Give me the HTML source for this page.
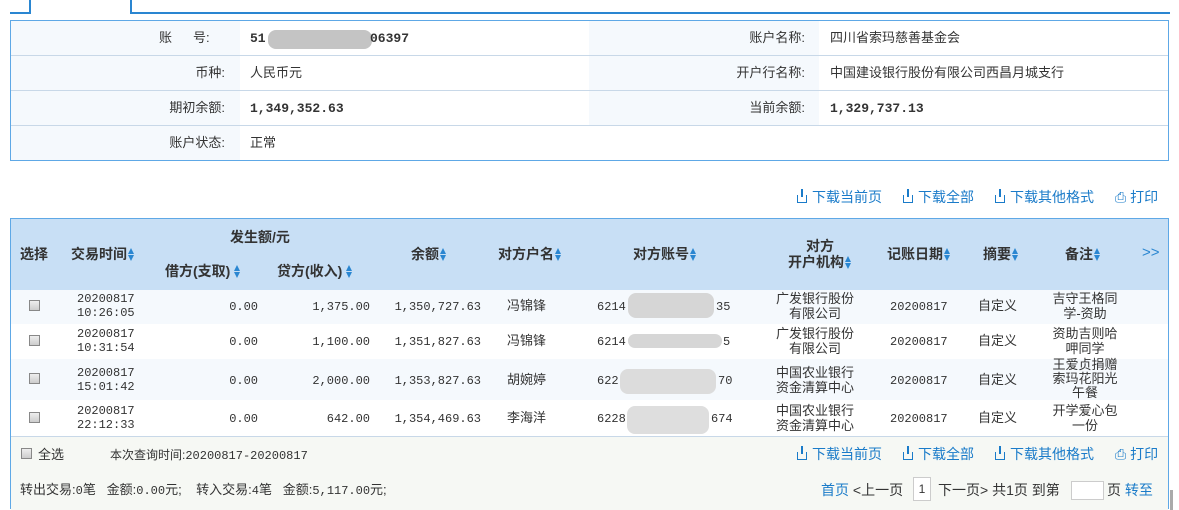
<!DOCTYPE html>
<html><head><meta charset="utf-8"><style>
*{margin:0;padding:0;box-sizing:border-box}
body{width:1179px;height:510px;background:#fff;position:relative;overflow:hidden;font-family:"Liberation Sans","Noto Sans CJK SC",sans-serif;font-size:13px;color:#333}
.a{position:absolute;white-space:nowrap;line-height:16px}
.m{font-family:"Liberation Mono","Noto Sans CJK SC",monospace;font-size:12px}
.mb{font-family:"Liberation Mono","Noto Sans CJK SC",monospace;font-size:13px;font-weight:bold}
.r{text-align:right}.c{text-align:center}
.h{font-weight:bold;font-size:14px;color:#333}
.ar{display:inline-block;width:7px;height:14px;vertical-align:middle;position:relative;margin-left:1px}
.ar:before{content:"";position:absolute;left:0;top:0;border:3.5px solid transparent;border-bottom:6px solid #2a86d1;border-top:0}
.ar:after{content:"";position:absolute;left:0;top:7px;border:3.5px solid transparent;border-top:6px solid #2a86d1;border-bottom:0}
.lk{color:#1a7bc9;font-size:14px}
.blur{position:absolute;background:#ccc;border-radius:8px}
.cb{position:absolute;width:11px;height:11px;border:1px solid #888;background:linear-gradient(#eee,#ccc)}
.dl{display:inline-block;width:10px;height:8px;border:1.5px solid #1a7bc9;border-top:none;margin-right:5px;vertical-align:-1px;position:relative}
.dl:before{content:"";position:absolute;left:3px;top:-6px;width:1.5px;height:8px;background:#1a7bc9}
</style></head><body>
<div class="a" style="left:10px;top:12px;width:20px;height:2px;background:#2a86d1"></div>
<div class="a" style="left:29px;top:0;width:2px;height:14px;background:#2a86d1"></div>
<div class="a" style="left:130px;top:0;width:2px;height:14px;background:#2a86d1"></div>
<div class="a" style="left:130px;top:12px;width:1040px;height:2px;background:#2a86d1"></div>

<div class="a" style="left:10px;top:20px;width:1159px;height:141px;border:1px solid #5ea8e6"></div>
<div class="a" style="left:11px;top:21px;width:229px;height:139px;background:#f5f9fd"></div>
<div class="a" style="left:589px;top:21px;width:230px;height:105px;background:#f5f9fd"></div>
<div class="a" style="left:11px;top:55px;width:1157px;height:1px;background:#c8d8e8"></div>
<div class="a" style="left:11px;top:90px;width:1157px;height:1px;background:#c8d8e8"></div>
<div class="a" style="left:11px;top:125px;width:1157px;height:1px;background:#c8d8e8"></div>
<div class="a" style="left:159px;top:30px">账</div>
<div class="a" style="left:193px;top:30px">号:</div>
<div class="a r" style="left:100px;width:125px;top:65px">币种:</div>
<div class="a r" style="left:100px;width:125px;top:100px">期初余额:</div>
<div class="a r" style="left:100px;width:125px;top:135px">账户状态:</div>
<div class="a mb" style="left:250px;top:31px">51</div>
<div class="blur" style="left:268px;top:30px;width:104px;height:19px;background:#c4c4c4"></div>
<div class="a mb" style="left:370px;top:31px">06397</div>
<div class="a" style="left:250px;top:65px">人民币元</div>
<div class="a mb" style="left:250px;top:101px">1,349,352.63</div>
<div class="a" style="left:250px;top:135px">正常</div>
<div class="a r" style="left:680px;width:125px;top:30px">账户名称:</div>
<div class="a r" style="left:680px;width:125px;top:65px">开户行名称:</div>
<div class="a r" style="left:680px;width:125px;top:100px">当前余额:</div>
<div class="a" style="left:830px;top:30px">四川省索玛慈善基金会</div>
<div class="a" style="left:830px;top:65px">中国建设银行股份有限公司西昌月城支行</div>
<div class="a mb" style="left:830px;top:101px">1,329,737.13</div>

<div class="a lk" style="left:797px;top:189px"><span class="dl"></span>下载当前页</div>
<div class="a lk" style="left:903px;top:189px"><span class="dl"></span>下载全部</div>
<div class="a lk" style="left:995px;top:189px"><span class="dl"></span>下载其他格式</div>
<div class="a lk" style="left:1115px;top:189px">⎙ 打印</div>

<div class="a" style="left:10px;top:218px;width:1159px;height:291px;border:1px solid #5ea8e6;border-bottom:none"></div>
<div class="a" style="left:11px;top:219px;width:1157px;height:71px;background:#c8dff5"></div>
<div class="a" style="left:11px;top:290px;width:1157px;height:34px;background:#f5f9fd"></div>
<div class="a" style="left:11px;top:359px;width:1157px;height:41px;background:#f5f9fd"></div>
<div class="a" style="left:11px;top:436px;width:1157px;height:1px;background:#c8d8e8"></div>
<div class="a" style="left:11px;top:437px;width:1157px;height:73px;background:#f6f8f4"></div>
<div class="a h" style="left:20px;top:246px">选择</div>
<div class="a h" style="left:71px;top:246px">交易时间<span class="ar"></span></div>
<div class="a h" style="left:230px;top:229px">发生额/元</div>
<div class="a h" style="left:165px;top:263px">借方(支取)<span class="ar" style="margin-left:4px"></span></div>
<div class="a h" style="left:277px;top:263px">贷方(收入)<span class="ar" style="margin-left:4px"></span></div>
<div class="a h" style="left:411px;top:246px">余额<span class="ar"></span></div>
<div class="a h" style="left:498px;top:246px">对方户名<span class="ar"></span></div>
<div class="a h" style="left:633px;top:246px">对方账号<span class="ar"></span></div>
<div class="a h c" style="left:770px;width:100px;top:238px;line-height:16px">对方<br>开户机构<span class="ar"></span></div>
<div class="a h" style="left:887px;top:246px">记账日期<span class="ar"></span></div>
<div class="a h" style="left:983px;top:246px">摘要<span class="ar"></span></div>
<div class="a h" style="left:1065px;top:246px">备注<span class="ar"></span></div>
<div class="a" style="left:1142px;top:245px;color:#2a86d1;font-size:15px">&gt;&gt;</div>

<div class="cb" style="left:29px;top:300px"></div>
<div class="cb" style="left:29px;top:335px"></div>
<div class="cb" style="left:29px;top:373px"></div>
<div class="cb" style="left:29px;top:412px"></div>

<div class="a m" style="left:77px;top:292px;line-height:14px">20200817<br>10:26:05</div>
<div class="a m" style="left:77px;top:327px;line-height:14px">20200817<br>10:31:54</div>
<div class="a m" style="left:77px;top:366px;line-height:14px">20200817<br>15:01:42</div>
<div class="a m" style="left:77px;top:404px;line-height:14px">20200817<br>22:12:33</div>

<div class="a m r" style="left:180px;width:78px;top:299px">0.00</div>
<div class="a m r" style="left:180px;width:78px;top:334px">0.00</div>
<div class="a m r" style="left:180px;width:78px;top:373px">0.00</div>
<div class="a m r" style="left:180px;width:78px;top:411px">0.00</div>

<div class="a m r" style="left:270px;width:100px;top:299px">1,375.00</div>
<div class="a m r" style="left:270px;width:100px;top:334px">1,100.00</div>
<div class="a m r" style="left:270px;width:100px;top:373px">2,000.00</div>
<div class="a m r" style="left:270px;width:100px;top:411px">642.00</div>

<div class="a m r" style="left:380px;width:101px;top:299px">1,350,727.63</div>
<div class="a m r" style="left:380px;width:101px;top:334px">1,351,827.63</div>
<div class="a m r" style="left:380px;width:101px;top:373px">1,353,827.63</div>
<div class="a m r" style="left:380px;width:101px;top:411px">1,354,469.63</div>

<div class="a" style="left:507px;top:298px">冯锦锋</div>
<div class="a" style="left:507px;top:333px">冯锦锋</div>
<div class="a" style="left:507px;top:372px">胡婉婷</div>
<div class="a" style="left:507px;top:410px">李海洋</div>

<div class="a m" style="left:597px;top:299px">6214</div><div class="a m" style="left:716px;top:299px">35</div>
<div class="blur" style="left:628px;top:293px;width:86px;height:25px;background:#d6d6d6"></div>
<div class="a m" style="left:597px;top:334px">6214</div><div class="a m" style="left:723px;top:334px">5</div>
<div class="blur" style="left:628px;top:334px;width:94px;height:14px;background:#d6d6d6"></div>
<div class="a m" style="left:597px;top:373px">622</div><div class="a m" style="left:718px;top:373px">70</div>
<div class="blur" style="left:620px;top:369px;width:96px;height:25px;background:#dcdcdc"></div>
<div class="a m" style="left:597px;top:411px">6228</div><div class="a m" style="left:711px;top:411px">674</div>
<div class="blur" style="left:627px;top:406px;width:82px;height:28px;background:#dedede"></div>

<div class="a c" style="left:760px;width:110px;top:291px;line-height:15px">广发银行股份<br>有限公司</div>
<div class="a c" style="left:760px;width:110px;top:326px;line-height:15px">广发银行股份<br>有限公司</div>
<div class="a c" style="left:760px;width:110px;top:365px;line-height:15px">中国农业银行<br>资金清算中心</div>
<div class="a c" style="left:760px;width:110px;top:403px;line-height:15px">中国农业银行<br>资金清算中心</div>

<div class="a m" style="left:890px;top:299px">20200817</div>
<div class="a m" style="left:890px;top:334px">20200817</div>
<div class="a m" style="left:890px;top:373px">20200817</div>
<div class="a m" style="left:890px;top:411px">20200817</div>

<div class="a" style="left:978px;top:298px">自定义</div>
<div class="a" style="left:978px;top:333px">自定义</div>
<div class="a" style="left:978px;top:372px">自定义</div>
<div class="a" style="left:978px;top:410px">自定义</div>

<div class="a c" style="left:1035px;width:100px;top:291px;line-height:15px">吉守王格同<br>学-资助</div>
<div class="a c" style="left:1035px;width:100px;top:326px;line-height:15px">资助吉则哈<br>呷同学</div>
<div class="a c" style="left:1035px;width:100px;top:358px;line-height:14px">王爱贞捐赠<br>索玛花阳光<br>午餐</div>
<div class="a c" style="left:1035px;width:100px;top:403px;line-height:15px">开学爱心包<br>一份</div>

<div class="cb" style="left:21px;top:448px"></div>
<div class="a" style="left:38px;top:447px">全选</div>
<div class="a" style="left:110px;top:447px;font-size:12px">本次查询时间:<span class="m">20200817-20200817</span></div>
<div class="a lk" style="left:797px;top:446px"><span class="dl"></span>下载当前页</div>
<div class="a lk" style="left:903px;top:446px"><span class="dl"></span>下载全部</div>
<div class="a lk" style="left:995px;top:446px"><span class="dl"></span>下载其他格式</div>
<div class="a lk" style="left:1115px;top:446px">⎙ 打印</div>
<div class="a" style="left:20px;top:482px;font-size:13px">转出交易:<span class="m">0</span>笔&nbsp;&nbsp;&nbsp;金额:<span class="m">0.00</span>元;&nbsp;&nbsp;&nbsp;&nbsp;转入交易:<span class="m">4</span>笔&nbsp;&nbsp;&nbsp;金额:<span class="m">5,117.00</span>元;</div>
<div class="a" style="left:821px;top:482px;font-size:14px"><span style="color:#1a7bc9">首页</span> &lt;上一页</div>
<div class="a c" style="left:913px;top:477px;width:18px;height:24px;border:1px solid #ccc;background:#fff;line-height:22px;font-size:12px">1</div>
<div class="a" style="left:938px;top:482px;font-size:14px">下一页&gt; 共1页 到第</div>
<div class="a" style="left:1071px;top:481px;width:33px;height:19px;border:1px solid #ccc;background:#fff"></div>
<div class="a" style="left:1107px;top:482px;font-size:14px">页 <span style="color:#1a7bc9">转至</span></div>
<div class="a" style="left:1170px;top:490px;width:3px;height:20px;background:#aaa"></div>
</body></html>
